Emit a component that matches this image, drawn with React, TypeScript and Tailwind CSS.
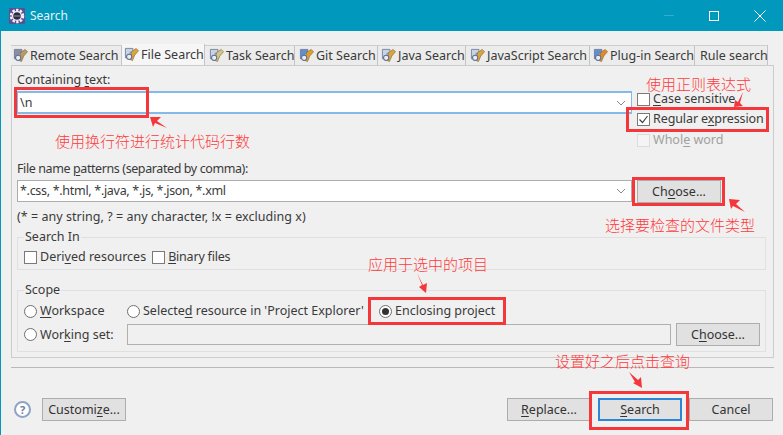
import React from "react";

const cjk = "absolute text-[15px] leading-[15px] text-[#ff3a3a] whitespace-nowrap font-['Noto_Sans_CJK_SC',sans-serif] font-light";

function U({ children }: { children: React.ReactNode }) {
  return <span className="underline underline-offset-2">{children}</span>;
}

function TabIcon({ accent = "#d9a441", page = "#c9d3e6" }: { accent?: string; page?: string }) {
  return (
    <svg width="15" height="15" viewBox="0 0 16 16" className="shrink-0">
      <path d="M1.5 1.5h8v4h-3v6h-5z" fill={page} stroke="#6d7a99" strokeWidth="0.9" />
      <path d="M8 5l5-3.5 2.5 2.5-4 4.500-2.500 6-3-1.500 1.500-5z" fill={accent} stroke="#8a6a2a" strokeWidth="0.7" />
      <circle cx="5.500" cy="10.500" r="2.800" fill="#e8edf5" stroke="#5f6f92" strokeWidth="1.100" />
    </svg>
  );
}

function Tab({ label, icon = true, active = false, w, accent, page }: { label: string; icon?: boolean; active?: boolean; w: string; accent?: string; page?: string }) {
  return (
    <div className={`${w} flex items-center gap-[2px] border-r border-[#c4c4c4] text-[12.5px] text-[#3a3a3a] whitespace-nowrap shrink-0 ${active ? "bg-[#f6f6f6] h-[21px]" : "bg-[#ececec] border-t border-t-[#cfcfcf] h-[20px]"}`}>
      {icon && <TabIcon accent={accent} page={page} />}
      <span>{label}</span>
    </div>
  );
}

function Check({ checked = false, disabled = false }: { checked?: boolean; disabled?: boolean }) {
  return (
    <span className={`w-[13px] h-[13px] border flex items-center justify-center shrink-0 ${disabled ? "border-[#dcdcdc] bg-[#f4f4f4]" : "border-[#7a7a7a] bg-white"}`}>
      {checked && (
        <svg width="11" height="11" viewBox="0 0 11 11"><path d="M1.5 5.500l3 3 5-6.500" fill="none" stroke="#444" strokeWidth="1.200" /></svg>
      )}
    </span>
  );
}

function Radio({ checked = false }: { checked?: boolean }) {
  return (
    <span className="w-[13px] h-[13px] rounded-full border border-[#6f6f6f] bg-white flex items-center justify-center shrink-0">
      {checked && <span className="w-[7px] h-[7px] rounded-full bg-[#333]" />}
    </span>
  );
}

function Btn({ children, className = "" }: { children: React.ReactNode; className?: string }) {
  return (
    <div className={`h-[23px] w-[84px] shrink-0 flex items-center justify-center bg-[#e1e1e1] border border-[#adadad] text-[#333] ${className}`}>{children}</div>
  );
}

function Chevron() {
  return (
    <svg width="10" height="6" viewBox="0 0 10 6" className="shrink-0"><path d="M1 1l4 4 4-4" fill="none" stroke="#8a8a8a" strokeWidth="1" /></svg>
  );
}

export default function App() {
  return (
    <div className="relative w-[783px] h-[435px] overflow-hidden bg-[#f0f0f0] border-l border-[#0098bc] flex flex-col text-[12.5px] leading-[16px] text-[#3a3a3a] font-['Noto_Sans','Noto_Sans_CJK_SC',sans-serif]">
      <div className="h-[31px] -ml-[1px] bg-[#0098bc] flex items-center shrink-0 text-white">
        <svg width="16" height="16" viewBox="0 0 16 16" className="ml-[9px]">
          <rect x="0" y="0" width="16" height="16" rx="1" fill="#5d4f93" />
          <circle cx="8" cy="8" r="6" fill="none" stroke="#f4f4f4" strokeWidth="2.400" strokeDasharray="2.400 1.400" />
          <circle cx="8" cy="8" r="5" fill="#f4f4f4" />
          <circle cx="8" cy="8" r="3.800" fill="#2f2a44" />
          <path d="M4.500 8h7" stroke="#9a93b8" strokeWidth="1" />
        </svg>
        <span className="ml-[5px] text-[12px] text-[#e6f5f9]">Search</span>
        <div className="ml-auto flex items-center">
          <div className="w-[10px] h-[1px] bg-[#33adc9] mr-[35px]" />
          <div className="w-[10px] h-[10px] border border-white mr-[35px]" />
          <svg width="12" height="12" viewBox="0 0 12 12" className="mr-[17px]"><path d="M0.500 0.500l11 11M11.500 0.500l-11 11" stroke="#fff" strokeWidth="1" /></svg>
        </div>
      </div>

      <div className="flex ml-[10px] mt-[14px] h-[20px] items-end shrink-0">
        <Tab label="Remote Search" w="w-[111px] pl-[2px]" accent="#b59a6a" page="#8a8fa0" />
        <Tab label="File Search" w="w-[83px] pl-[2px]" active />
        <Tab label="Task Search" w="w-[90px] pl-[4px]" accent="#d4c58a" />
        <Tab label="Git Search" w="w-[83px] pl-[4px]" accent="#e0a030" page="#5f8fd0" />
        <Tab label="Java Search" w="w-[88px] pl-[3px]" accent="#d9a441" />
        <Tab label="JavaScript Search" w="w-[124px] pl-[4px]" accent="#d9a441" />
        <Tab label="Plug-in Search" w="w-[105px] pl-[3px]" accent="#e08a30" page="#5f8fd0" />
        <Tab label="Rule search" icon={false} w="w-[73px] pl-[5px]" />
      </div>

      <div className="ml-[10px] w-[763px] h-[293px] border border-[#cccccc] bg-[#f0f0f0] px-[5px] flex flex-col shrink-0">
        <div className="mt-[6px] h-[16px]">Containing <U>t</U>ext:</div>
        <div className="flex mt-[3px]">
          <div className="w-[615px] h-[23px] bg-white border-y-2 border-x border-[#84b9e8] pl-[2px] pr-[5px] flex items-center justify-between">
            <span>\n</span><Chevron />
          </div>
          <div className="ml-[5px] -mt-[2px] flex flex-col">
            <div className="h-[20px] flex items-center gap-[3px]"><Check /><span><U>C</U>ase sensitive</span></div>
            <div className="h-[20px] flex items-center gap-[3px]"><Check checked /><span className="tracking-[-0.1px]">Regular e<U>x</U>pression</span></div>
            <div className="mt-[1px] h-[20px] flex items-center gap-[3px] text-[#a0a0a0]"><Check disabled /><span>Whol<U>e</U> word</span></div>
          </div>
        </div>
        <div className="mt-[11px] h-[16px] tracking-[-0.4px]">File name <U>p</U>atterns (separated by comma):</div>
        <div className="flex mt-[3px]">
          <div className="w-[615px] h-[22px] bg-white border border-[#adadad] pl-[2px] pr-[5px] flex items-center justify-between">
            <span className="tracking-[-0.3px]">*.css, *.html, *.java, *.js, *.json, *.xml</span><Chevron />
          </div>
          <Btn className="ml-[5px] h-[22px]">Ch<U>o</U>ose...</Btn>
        </div>
        <div className="mt-[6px] h-[16px] tracking-[0.04px]">(* = any string, ? = any character, !x = excluding x)</div>
        <div className="relative mt-[12px] h-[33px] w-[749px] border border-[#e0e0e0] shrink-0">
          <span className="absolute -top-[9px] left-[6px] bg-[#f0f0f0] px-[1px]">Search In</span>
          <div className="flex items-center mt-[11px] ml-[6px]">
            <Check /><span className="ml-[3px]">Deri<U>v</U>ed resources</span>
            <span className="ml-[6px]"><Check /></span><span className="ml-[3px] tracking-[-0.2px]"><U>B</U>inary files</span>
          </div>
        </div>
        <div className="relative mt-[20px] h-[62px] w-[749px] border border-[#e0e0e0] shrink-0">
          <span className="absolute -top-[9px] left-[6px] bg-[#f0f0f0] px-[1px]">Scope</span>
          <div className="flex items-center mt-[12px] ml-[6px]">
            <Radio /><span className="ml-[3px] w-[87px]"><U>W</U>orkspace</span>
            <Radio /><span className="ml-[3px] w-[236px]">Selecte<U>d</U> resource in 'Project Explorer'</span>
            <Radio checked /><span className="ml-[3px]">Enclosing project</span>
          </div>
          <div className="flex items-center mt-[4px] ml-[6px]">
            <Radio /><span className="ml-[3px] w-[87px]">Wor<U>k</U>ing set:</span>
            <div className="w-[544px] h-[21px] border border-[#b0b0b0] bg-[#f0f0f0] shrink-0" />
            <Btn className="ml-[5px]">C<U>h</U>oose...</Btn>
          </div>
        </div>
      </div>

      <div className="ml-[10px] w-[763px] h-[1px] mt-[9px] bg-[#b8b8b8] shrink-0" />

      <div className="flex items-center mt-[30px] ml-[13px] w-[759px] shrink-0">
        <div className="w-[17px] h-[17px] rounded-full border-2 border-[#8fa3c4] flex items-center justify-center text-[11px] font-bold text-[#6d7f9f] bg-white">?</div>
        <Btn className="ml-[11px]">Customi<U>z</U>e...</Btn>
        <Btn className="ml-auto"><span><U>R</U>eplace...</span></Btn>
        <Btn className="ml-[7px] !border-2 !border-[#2b86d8]"><span><U>S</U>earch</span></Btn>
        <Btn className="ml-[7px]">Cancel</Btn>
      </div>

      {/* red annotation overlays */}
      <div className="absolute -left-[1px] top-0 w-[783px] h-[435px] pointer-events-none">
        <div className="absolute left-[14px] top-[87px] w-[135px] h-[31px] border-[3px] border-[#f4373a]" />
        <div className="absolute left-[626px] top-[107px] w-[143px] h-[25px] border-[3px] border-[#f4373a]" />
        <div className="absolute left-[632px] top-[177px] w-[93px] h-[29px] border-[3px] border-[#f4373a]" />
        <div className="absolute left-[368px] top-[297px] w-[138px] h-[28px] border-[3px] border-[#f4373a]" />
        <div className="absolute left-[589px] top-[391px] w-[100px] h-[39px] border-[3px] border-[#f4373a]" />

        <div className={cjk} style={{ left: 55, top: 133 }}>使用换行符进行统计代码行数</div>
        <div className={cjk} style={{ left: 646, top: 76 }}>使用正则表达式</div>
        <div className={cjk} style={{ left: 605, top: 217 }}>选择要检查的文件类型</div>
        <div className={cjk} style={{ left: 368, top: 256 }}>应用于选中的项目</div>
        <div className={cjk} style={{ left: 555, top: 353 }}>设置好之后点击查询</div>

        <svg className="absolute left-0 top-0" width="783" height="435" viewBox="0 0 783 435">
          <g fill="#f4373a">
            <polygon points="150,117 161,117 157,121 167,128 155,123 153,127" />
            <polygon points="734,107 735,100 738,102 743,92 740,103 743,106" />
            <polygon points="729,199 740,200 736,204 745,212 733,206 731,209" />
            <polygon points="417,273 423,285 427,283 426,293 419,287 422,285" />
            <polygon points="629,372 638,380 641,377 642,388 633,383 635,382" />
          </g>
        </svg>
      </div>
    </div>
  );
}
